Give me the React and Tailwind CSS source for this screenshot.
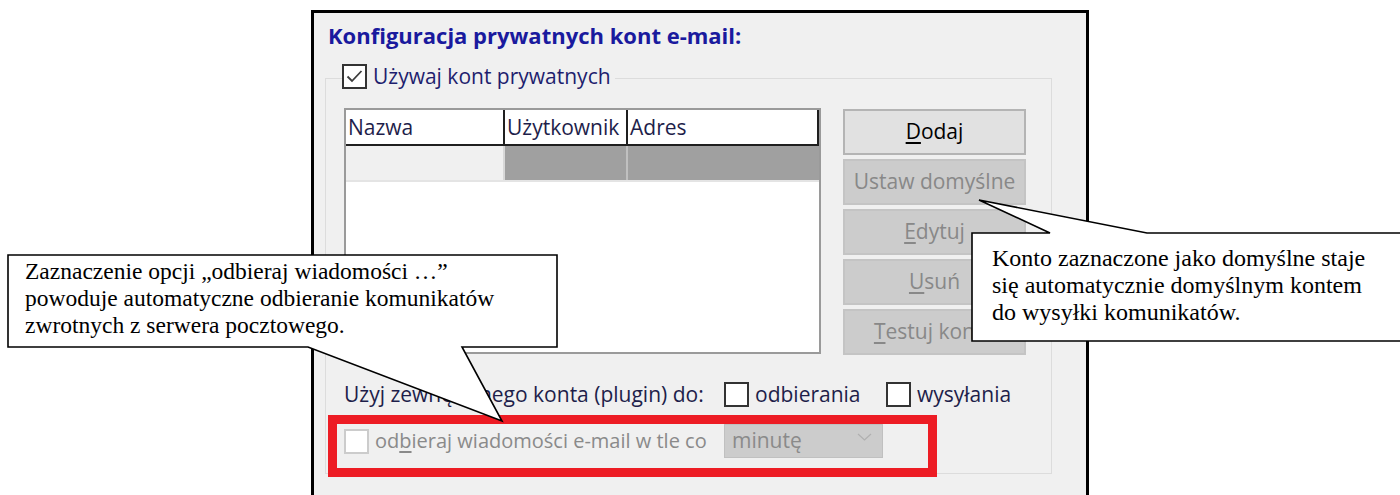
// Private e-mail account settings dialog with two help callouts.

const ui = { fontFamily: '"Open Sans", "Noto Sans", sans-serif' }
const serif = { fontFamily: '"Liberation Serif", "Times New Roman", serif' }

function CheckBox({ checked, disabled }) {
  return (
    <span
      className={
        'inline-flex h-[25px] w-[25px] shrink-0 items-center justify-center bg-white border-2 ' +
        (disabled ? 'border-[#cccccc]' : 'border-[#333333]')
      }
    >
      {checked ? (
        <svg width="19" height="19" viewBox="0 0 19 19">
          <path d="M2.5 9.5 L7 14 L16.5 4" fill="none" stroke="#3c3c3c" strokeWidth="1.8" />
        </svg>
      ) : null}
    </span>
  )
}

function Button({ children, disabled }) {
  return (
    <div
      className={
        'flex h-[46px] w-[183px] items-center justify-center border-2 text-[21px] ' +
        (disabled ? 'border-[#c4c4c4] bg-[#cccccc] text-[#888888]' : 'border-[#b4b4b4] bg-[#e1e1e1] text-black')
      }
    >
      {children}
    </div>
  )
}

function AccountList() {
  return (
    <div className="flex h-[246px] w-[477px] flex-col border-2 border-[#9a9a9a] bg-white">
      <div className="flex h-[36px] text-[21px] text-[#1e1e4a]">
        <div className="w-[159px] border-r-2 border-b-2 border-[#1f1f1f] pl-[2px] leading-[34px]">Nazwa</div>
        <div className="w-[123px] border-r-2 border-b-2 border-[#1f1f1f] pl-[2px] leading-[34px]">Użytkownik</div>
        <div className="flex-1 border-r-2 border-b-2 border-[#1f1f1f] pl-[2px] leading-[34px]">Adres</div>
      </div>
      <div className="flex h-[36px] border-b-2 border-[#e4e4e4]">
        <div className="w-[159px] border-r-2 border-[#d8d8d8] bg-[#f0f0f0]" />
        <div className="w-[123px] border-r-2 border-[#c0c0c0] bg-[#a0a0a0]" />
        <div className="flex-1 bg-[#a0a0a0]" />
      </div>
    </div>
  )
}

export default function App() {
  return (
    <div className="relative h-[495px] w-[1400px] overflow-hidden bg-white" style={ui}>
      <div className="ml-[311px] mt-[10px] h-[485px] w-[778px] border-[3px] border-b-0 border-black bg-[#f0f0f0]">
        <h1 className="ml-[14px] mt-[8px] text-[22px] font-bold leading-[28px] text-[#1a1a9e]">
          Konfiguracja prywatnych kont e-mail:
        </h1>

        <fieldset className="ml-[11px] mt-[15px] h-[410px] w-[727px] border border-[#dcdcdc]">
          <legend className="ml-[16px] flex h-[28px] items-start gap-[6px] pr-[4px] text-[21px] leading-[22px] text-[#1e1e6e]">
            <CheckBox checked />
            <span className="pt-[1px]">Używaj kont prywatnych</span>
          </legend>

          <div className="ml-[18px] mt-[16px] flex gap-[22px]">
            <AccountList />
            <div className="flex flex-col gap-[4px] pt-[1px]">
              <Button>
                <span className="underline underline-offset-[3px]">D</span>odaj
              </Button>
              <Button disabled>Ustaw domyślne</Button>
              <Button disabled>
                <span className="underline underline-offset-[3px]">E</span>dytuj
              </Button>
              <Button disabled>
                <span className="underline underline-offset-[3px]">U</span>suń
              </Button>
              <Button disabled>
                <span className="underline underline-offset-[3px]">T</span>estuj konto
              </Button>
            </div>
          </div>

          <div className="ml-[18px] mt-[27px] flex h-[25px] items-center text-[21px] leading-[25px] text-[#1e1e4a]">
            <span className="w-[380px]">Użyj zewnętrznego konta (plugin) do:</span>
            <CheckBox />
            <span className="ml-[6px] w-[131px]">odbierania</span>
            <CheckBox />
            <span className="ml-[6px]">wysyłania</span>
          </div>

          <div className="ml-[18px] mt-[17px] flex h-[34px] items-center text-[20px] text-[#8a8a8a]">
            <CheckBox disabled />
            <span className="ml-[6px] w-[349px] whitespace-nowrap">
              od<span className="underline underline-offset-[3px]">b</span>ieraj wiadomości e-mail w tle co
            </span>
            <div className="flex h-[34px] w-[159px] items-center justify-between border border-[#c0c0c0] bg-[#cccccc] pl-[7px] pr-[10px] text-[21px] text-[#8a8a8a]">
              <span>minutę</span>
              <svg className="-mt-[8px]" width="15" height="8" viewBox="0 0 15 8">
                <path d="M1 1 L7.5 7 L14 1" fill="none" stroke="#b0b0b0" strokeWidth="1.2" />
              </svg>
            </div>
          </div>
        </fieldset>
      </div>

      {/* red frame around the background-receive option */}
      <div className="absolute left-[328px] top-[415px] h-[62px] w-[609px] border-[9px] border-[#ed1c24]" />

      {/* callout shapes */}
      <svg className="absolute left-0 top-0" width="1400" height="495" viewBox="0 0 1400 495">
        <polygon
          points="8,255 557,255 557,347 462,347 502,421 308,347 8,347"
          fill="#ffffff"
          stroke="#000000"
          strokeWidth="1.6"
        />
        <polygon
          points="972,233 1050,233 979,200 1147,233 1404,233 1404,341 972,341"
          fill="#ffffff"
          stroke="#000000"
          strokeWidth="1.6"
        />
      </svg>

      <div className="absolute left-[25px] top-[258px] text-[23.5px] leading-[27px] text-black" style={serif}>
        <div>Zaznaczenie opcji „odbieraj wiadomości …”</div>
        <div>powoduje automatyczne odbieranie komunikatów</div>
        <div>zwrotnych z serwera pocztowego.</div>
      </div>

      <div className="absolute left-[992px] top-[245px] text-[24px] leading-[27px] text-black" style={serif}>
        <div>Konto zaznaczone jako domyślne staje</div>
        <div>się automatycznie domyślnym kontem</div>
        <div>do wysyłki komunikatów.</div>
      </div>
    </div>
  )
}
